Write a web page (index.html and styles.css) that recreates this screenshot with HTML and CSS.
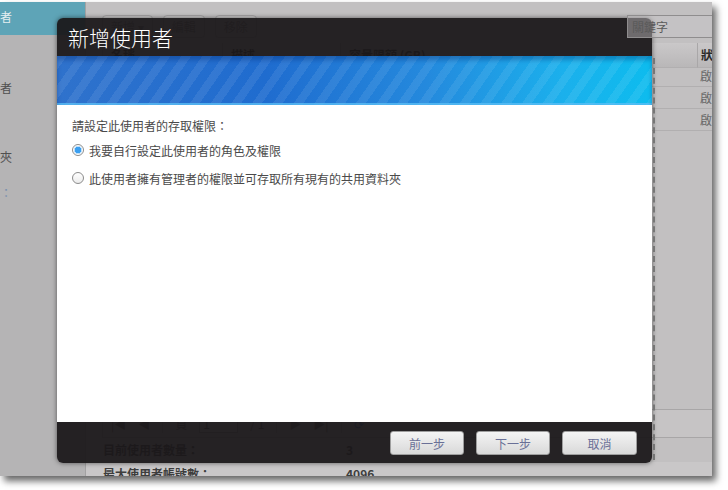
FILE: index.html
```html
<!DOCTYPE html>
<html lang="zh-Hant">
<head>
    <meta charset="UTF-8">
    <meta name="viewport" content="width=device-width, initial-scale=1.0">
    <title>新增使用者</title>
    <link rel="stylesheet" href="styles.css">
</head>
<body>
    <div class="window">
        <aside class="sidebar">
            <div class="side-item active">者</div>
            <div class="side-item second">者</div>
            <div class="side-item third">夾</div>
            <div class="side-item fourth">：</div>
        </aside>

        <main class="main">
            <div class="toolbar">
                <span class="tool-btn">新增 ▾</span>
                <span class="tool-btn">編輯</span>
                <span class="tool-btn">移除</span>
                <span class="search">關鍵字</span>
            </div>

            <div class="grid">
                <div class="cell head">名稱</div>
                <div class="cell head">描述</div>
                <div class="cell head">容量限額 (GB)</div>
                <div class="cell head">狀態</div>

                <div class="cell">admin</div>
                <div class="cell"></div>
                <div class="cell"></div>
                <div class="cell">啟用</div>

                <div class="cell">guest</div>
                <div class="cell"></div>
                <div class="cell"></div>
                <div class="cell">啟用</div>

                <div class="cell">user</div>
                <div class="cell"></div>
                <div class="cell"></div>
                <div class="cell">啟用</div>
            </div>

            <div class="pager">
                <span class="pg">|◀</span>
                <span class="pg">◀</span>
                <span class="pg-sep"></span>
                <span class="pg">頁</span>
                <span class="pg-input">1</span>
                <span class="pg">/ 1</span>
                <span class="pg-sep"></span>
                <span class="pg">▶</span>
                <span class="pg">▶|</span>
                <span class="pg-sep"></span>
                <span class="pg refresh">⟳</span>
            </div>

            <div class="summary">
                <span class="summary-label">目前使用者數量：</span>
                <span>3</span>
            </div>
            <div class="summary light">
                <span class="summary-label">最大使用者帳號數：</span>
                <span>4096</span>
            </div>
        </main>

        <div class="modal">
            <div class="modal-head">新增使用者</div>
            <div class="modal-banner"></div>
            <div class="modal-body">
                <p class="prompt">請設定此使用者的存取權限：</p>
                <label class="choice">
                    <input type="radio" name="role" checked>
                    <span>我要自行設定此使用者的角色及權限</span>
                </label>
                <label class="choice">
                    <input type="radio" name="role">
                    <span>此使用者擁有管理者的權限並可存取所有現有的共用資料夾</span>
                </label>
            </div>
            <div class="modal-foot">
                <button class="step-btn">前一步</button>
                <button class="step-btn">下一步</button>
                <button class="step-btn wide">取消</button>
            </div>
        </div>
    </div>
</body>
</html>
```

FILE: styles.css
```css
body {
    margin: 0;
    width: 728px;
    height: 490px;
    overflow: hidden;
    background: #fff;
    font-family: "Noto Sans CJK TC", "Liberation Sans", sans-serif;
    font-size: 12px;
    color: #3a3a3a;
}

.window {
    position: relative;
    display: flex;
    width: 712px;
    height: 474px;
    margin-top: 2px;
    overflow: hidden;
    background: #c2c0c1;
    box-shadow: 4px 5px 7px rgba(0, 0, 0, 0.6);
}

/* dimmed side navigation */
.sidebar {
    flex: 0 0 85px;
    background: #b5b4b5;
    border-right: 1px solid #a3a2a3;
}

.side-item {
    height: 30px;
    line-height: 30px;
    color: #505050;
    font-size: 12px;
}

.side-item.active {
    height: 33px;
    background: #5ea4b7;
    color: #e4eef0;
}

.side-item.second { margin-top: 38px; }
.side-item.third { margin-top: 39px; }
.side-item.fourth { margin-top: 6px; color: #7890ae; }

.main {
    flex: 1;
    min-width: 0;
}

.toolbar {
    display: flex;
    align-items: center;
    gap: 10px;
    margin: 13px 0 0 16px;
    height: 23px;
}

.tool-btn {
    height: 21px;
    line-height: 21px;
    padding: 0 8px;
    border: 1px solid #a6a4a5;
    border-radius: 4px;
    background: #c9c7c8;
    color: #7a7a7a;
}

.search {
    position: relative;
    z-index: 2;
    margin-left: auto;
    width: 80px;
    height: 21px;
    line-height: 21px;
    padding-left: 4px;
    border: 1px solid #8f8d8e;
    border-right: none;
    background: rgba(200, 198, 199, 0.45);
    color: #5a5a5a;
}

.grid {
    display: grid;
    grid-template-columns: 120px 118px 357px 1fr;
    grid-auto-rows: 22px;
    margin: 5px 0 0 16px;
}

.cell {
    line-height: 21px;
    padding-left: 3px;
    border-bottom: 1px solid #b1afb0;
    white-space: nowrap;
    color: #6a6a6a;
}

.cell.head {
    height: 24px;
    line-height: 24px;
    padding-left: 8px;
    border-left: 1px solid #a9a7a8;
    background: linear-gradient(#cac8c9, #b9b7b8);
    font-weight: bold;
    color: #2c2c2c;
}

.grid .head:nth-child(4) {
    padding-left: 3px;
}

.grid > .cell:nth-child(n+5) {
    height: 21px;
}

.pager {
    display: flex;
    align-items: center;
    gap: 12px;
    height: 27px;
    margin: 278px 0 0 16px;
    padding-left: 8px;
    border: 1px solid #a8a6a7;
    border-right: none;
    background: #c6c4c5;
    color: #5a5a5a;
}

.pg-sep {
    width: 1px;
    height: 18px;
    background: #a0a0a0;
}

.pg-input {
    width: 34px;
    height: 16px;
    line-height: 16px;
    padding-left: 3px;
    border: 1px solid #999;
    background: #d2d0d1;
}

.refresh {
    color: #3b73c4;
}

.summary {
    display: flex;
    height: 24px;
    line-height: 24px;
    padding-left: 17px;
    font-weight: bold;
    color: #3d3d3d;
}

.summary.light {
    background: #c9c7c8;
}

.summary-label {
    width: 243px;
}

/* wizard dialog */
.modal {
    position: absolute;
    z-index: 1;
    left: 57px;
    top: 16px;
    width: 595px;
    height: 445px;
    display: flex;
    flex-direction: column;
    border-radius: 6px;
    box-shadow: 0 0 5px rgba(0, 0, 0, 0.55);
}

.modal::after {
    content: "";
    position: absolute;
    right: -3px;
    top: 40px;
    bottom: 3px;
    border-right: 2px dashed #767676;
}

.modal-head {
    height: 38px;
    line-height: 38px;
    padding-left: 11px;
    border-radius: 6px 6px 0 0;
    background: rgba(27, 23, 25, 0.94);
    color: #fff;
    font-size: 21px;
    font-weight: 300;
}

.modal-banner {
    height: 49px;
    background:
        repeating-linear-gradient(125deg, rgba(255, 255, 255, 0.08) 0 8px, rgba(255, 255, 255, 0) 8px 17px),
        linear-gradient(90deg, #2f72cc 0%, #1f6ccf 35%, #2489dd 62%, #1bb0ec 85%, #0dbcee 100%);
    box-shadow: inset 0 4px 4px rgba(0, 40, 110, 0.35), inset 0 -2px 0 rgba(90, 190, 245, 0.8);
}

.modal-body {
    flex: 1;
    padding: 12px 15px;
    background: #fff;
}

.prompt {
    margin: 0 0 1px;
    line-height: 18px;
    color: #4a4a4a;
}

.choice {
    display: flex;
    align-items: center;
    height: 28px;
    color: #4a4a4a;
}

.choice input {
    appearance: none;
    width: 12px;
    height: 12px;
    margin: 0 5px 0 0;
    border: 1px solid #8c8c8c;
    border-radius: 50%;
    background: linear-gradient(#fff, #ececec);
}

.choice input:checked {
    background: radial-gradient(circle, #3b9ff0 0 3px, #bfe0fa 3.5px 4px, #fff 4.5px);
}

.modal-foot {
    display: flex;
    justify-content: flex-end;
    gap: 12px;
    height: 41px;
    padding: 9px 15px 0 0;
    box-sizing: border-box;
    border-radius: 0 0 6px 6px;
    background: rgba(27, 23, 25, 0.94);
}

.step-btn {
    width: 74px;
    height: 24px;
    padding: 0;
    border: 1px solid #9e9e9e;
    border-radius: 3px;
    background: linear-gradient(#f4f4f4, #d9d9d9);
    font-family: inherit;
    font-size: 12px;
    color: #6a7097;
}

.step-btn.wide {
    width: 75px;
}
```
